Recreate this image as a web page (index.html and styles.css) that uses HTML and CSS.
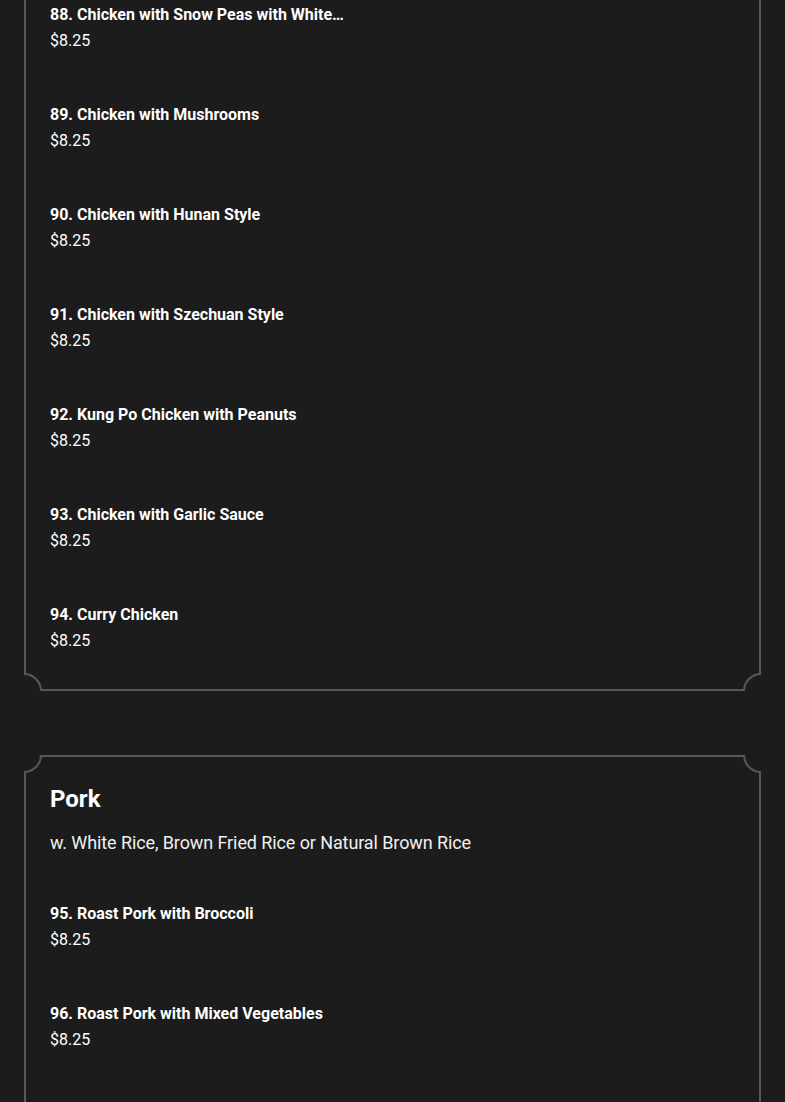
FILE: index.html
```html
<!DOCTYPE html>
<html lang="en">
<head>
<meta charset="utf-8">
<title>Menu</title>
<link rel="stylesheet" href="styles.css">
</head>
<body>
<main class="menu">
  <section class="card card-first">
    <div class="card-inner">
      <div class="item"><div class="item-name">88. Chicken with Snow Peas with White…</div><div class="item-price">$8.25</div></div>
      <div class="item"><div class="item-name">89. Chicken with Mushrooms</div><div class="item-price">$8.25</div></div>
      <div class="item"><div class="item-name">90. Chicken with Hunan Style</div><div class="item-price">$8.25</div></div>
      <div class="item"><div class="item-name">91. Chicken with Szechuan Style</div><div class="item-price">$8.25</div></div>
      <div class="item"><div class="item-name">92. Kung Po Chicken with Peanuts</div><div class="item-price">$8.25</div></div>
      <div class="item"><div class="item-name">93. Chicken with Garlic Sauce</div><div class="item-price">$8.25</div></div>
      <div class="item"><div class="item-name">94. Curry Chicken</div><div class="item-price">$8.25</div></div>
    </div>
    <span class="corner tl"></span><span class="corner tr"></span><span class="corner bl"></span><span class="corner br"></span>
  </section>
  <section class="card card-last">
    <div class="card-inner">
      <h2 class="card-title">Pork</h2>
      <p class="card-desc">w. White Rice, Brown Fried Rice or Natural Brown Rice</p>
      <div class="item"><div class="item-name">95. Roast Pork with Broccoli</div><div class="item-price">$8.25</div></div>
      <div class="item"><div class="item-name">96. Roast Pork with Mixed Vegetables</div><div class="item-price">$8.25</div></div>
    </div>
    <span class="corner tl"></span><span class="corner tr"></span><span class="corner bl"></span><span class="corner br"></span>
  </section>
</main>
</body>
</html>
```

FILE: styles.css
```css
html, body {
  margin: 0;
  padding: 0;
  background: #1c1c1c;
}
body {
  font-family: Roboto, "Liberation Sans", sans-serif;
  color: #ffffff;
  overflow: hidden;
  height: 1102px;
}
.menu {
  padding: 0 24px;
  display: flex;
  flex-direction: column;
  gap: 64px;
}
.card {
  position: relative;
  overflow: hidden;
}
.card-first {
  margin-top: -24px;
}
.card-inner {
  border: 2px solid #585858;
  padding: 24px 24px 35px;
  display: flex;
  flex-direction: column;
  gap: 48px;
}
.card-last .card-inner {
  padding-top: 25px;
  padding-bottom: 120px;
}
.card-title {
  margin: 0;
  font-size: 24px;
  font-weight: 700;
  line-height: 34px;
}
.card-desc {
  margin: -34px 0 -3px;
  font-size: 18px;
  line-height: 26px;
  letter-spacing: -0.1px;
  color: #f0f0f0;
}
.item {
  display: flex;
  flex-direction: column;
}
.item-name {
  font-size: 16px;
  font-weight: 700;
  line-height: 26px;
}
.item-price {
  font-size: 16px;
  font-weight: 400;
  line-height: 26px;
}
.corner {
  position: absolute;
  width: 36px;
  height: 36px;
  box-sizing: border-box;
  border: 2px solid #585858;
  border-radius: 50%;
  background: #1c1c1c;
}
.corner.tl { left: -18px; top: -18px; }
.corner.tr { right: -18px; top: -18px; }
.corner.bl { left: -18px; bottom: -18px; }
.corner.br { right: -18px; bottom: -18px; }
```
